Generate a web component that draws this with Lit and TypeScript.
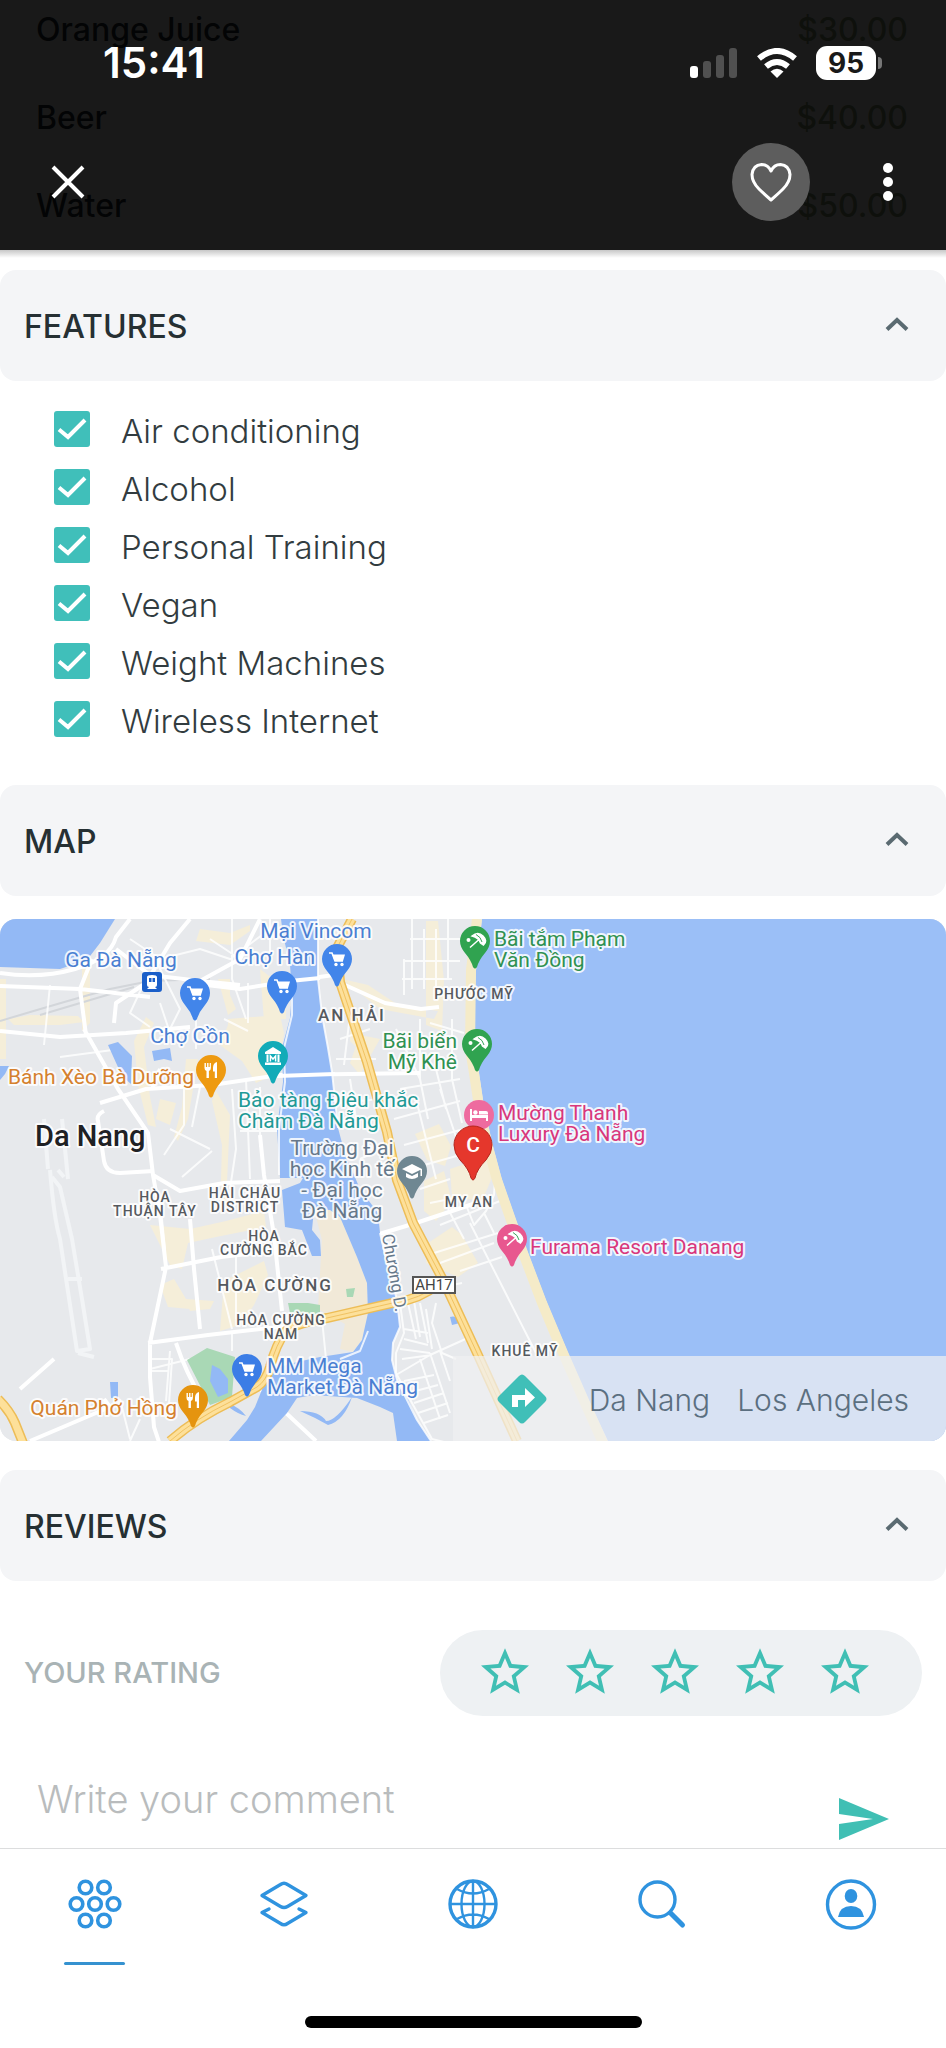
import { LitElement, html, svg, css } from "lit";
import { customElement, property, state } from "lit/decorators.js";

/* ---------- accordion panel heading ---------- */

@customElement("section-bar")
class SectionBar extends LitElement {
  @property() label = "";

  static styles = css`
    :host {
      display: block;
    }
    .bar {
      margin: 0;
      font: inherit;
    }
    .toggle {
      box-sizing: border-box;
      width: 100%;
      height: 111px;
      display: flex;
      align-items: center;
      justify-content: space-between;
      padding: 2px 37px 0 24px;
      border: 0;
      border-radius: 16px;
      background: #f4f5f7;
      color: #263033;
      font: 500 32px/40px Inter, sans-serif;
      cursor: pointer;
    }
    .chevron {
      width: 24px;
      height: 14px;
      margin-bottom: 6px;
      fill: none;
      stroke: #5a6a71;
      stroke-width: 4;
    }
  `;

  render() {
    return html`
      <h2 class="bar">
        <button class="toggle" aria-expanded="true">
          <span>${this.label}</span>
          <svg class="chevron" viewBox="0 0 24 14"><path d="M2 12.5 12 3 22 12.5" /></svg>
        </button>
      </h2>
    `;
  }
}

/* ---------- city map ---------- */

type Glyph = "cart" | "food" | "museum" | "beach" | "grad" | "bed";

const glyphs: Record<Glyph, unknown> = {
  cart: svg`<path d="M-8 -6h3l3 8h8" fill="none" stroke="#fff" stroke-width="1.6"/><path d="M-4.600 -4.500H8L6 2H-2.500z" fill="#fff"/><circle cx="-1" cy="5.500" r="1.700" fill="#fff"/><circle cx="5" cy="5.500" r="1.700" fill="#fff"/>`,
  food: svg`<path d="M-6.500 -7v5q0 2.500 2 3V8h2.400V1q2 -.5 2 -3V-7h-1.200v4h-1.200v-4h-1.400v4h-1.200v-4zM6 -8q-4 1 -4 6v3.500h1.800V8H6z" fill="#fff"/>`,
  museum: svg`<path d="M0 -9 8 -4v2H-8v-2zM-8 6.500H8V9H-8zM-6.500 -1.500h2V6h-2zM4.500 -1.500h2V6h-2z" fill="#fff"/><path d="M-2.600 5.500V0L0 3 2.600 0V5.500" fill="none" stroke="#fff" stroke-width="1.500"/>`,
  beach: svg`<circle cx="-6.500" cy="-1" r="2" fill="#fff"/><path d="M-5 6.500 4 -1.500M-3 -5Q3 -10 8 -5T8.500 4L5.500 2Q4 -3 -3 -5z" fill="#fff" stroke="#fff" stroke-width="1.500"/><path d="M1 -6.500Q6 -4 7 1" fill="none" stroke="#3aa45b" stroke-width="1"/>`,
  grad: svg`<path d="M0 -7 10 -2 0 3 -10 -2zM-6 2v4q6 4 12 0V2L0 5zM8.500 -2h1.500v7H8.500z" fill="#fff"/>`,
  bed: svg`<path d="M-9 -6h2v6h16v6h-2V3H-7v3h-2zM0 -4h7q2 0 2 2v1.500H0z" fill="#fff"/><circle cx="-3.600" cy="-2.500" r="2.200" fill="#fff"/>`,
};

const pins: { x: number; y: number; fill: string; glyph: Glyph }[] = [
  { x: 195, y: 74, fill: "#4285ea", glyph: "cart" },
  { x: 282, y: 67, fill: "#4285ea", glyph: "cart" },
  { x: 337, y: 40, fill: "#4285ea", glyph: "cart" },
  { x: 247, y: 450, fill: "#3b7de6", glyph: "cart" },
  { x: 211, y: 151, fill: "#ee9a10", glyph: "food" },
  { x: 193, y: 481, fill: "#e5940f", glyph: "food" },
  { x: 273, y: 137, fill: "#12abb8", glyph: "museum" },
  { x: 475, y: 22, fill: "#30a350", glyph: "beach" },
  { x: 477, y: 125, fill: "#30a350", glyph: "beach" },
  { x: 512, y: 320, fill: "#e8578f", glyph: "beach" },
  { x: 412, y: 252, fill: "#6f8792", glyph: "grad" },
];

type Label = {
  x: number;
  y: number;
  lines: string[];
  kind: string;
  anchor?: "start" | "middle" | "end";
};

const labels: Label[] = [
  { x: 316, y: 19, lines: ["Mại Vincom"], kind: "shop", anchor: "middle" },
  { x: 315, y: 45, lines: ["Chợ Hàn"], kind: "shop", anchor: "end" },
  { x: 121, y: 48, lines: ["Ga Đà Nẵng"], kind: "shop", anchor: "middle" },
  { x: 190, y: 124, lines: ["Chợ Cồn"], kind: "shop", anchor: "middle" },
  { x: 267, y: 454, lines: ["MM Mega", "Market Đà Nẵng"], kind: "shop" },
  { x: 194, y: 165, lines: ["Bánh Xèo Bà Dưỡng"], kind: "eat", anchor: "end" },
  { x: 177, y: 496, lines: ["Quán Phở Hồng"], kind: "eat", anchor: "end" },
  { x: 238, y: 188, lines: ["Bảo tàng Điêu khắc", "Chăm Đà Nẵng"], kind: "museum" },
  { x: 342, y: 236, lines: ["Trường Đại", "học Kinh tế", "- Đại học", "Đà Nẵng"], kind: "school", anchor: "middle" },
  { x: 494, y: 27, lines: ["Bãi tắm Phạm", "Văn Đồng"], kind: "beach" },
  { x: 457, y: 129, lines: ["Bãi biển", "Mỹ Khê"], kind: "beach", anchor: "end" },
  { x: 498, y: 201, lines: ["Mường Thanh", "Luxury Đà Nẵng"], kind: "hotel" },
  { x: 530, y: 335, lines: ["Furama Resort Danang"], kind: "hotel" },
  { x: 35, y: 227, lines: ["Da Nang"], kind: "city" },
  { x: 352, y: 102, lines: ["AN HẢI"], kind: "town", anchor: "middle" },
  { x: 275, y: 372, lines: ["HÒA CƯỜNG"], kind: "town", anchor: "middle" },
  { x: 474, y: 80, lines: ["PHƯỚC MỸ"], kind: "ward", anchor: "middle" },
  { x: 155, y: 283, lines: ["HÒA", "THUẬN TÂY"], kind: "ward", anchor: "middle" },
  { x: 245, y: 279, lines: ["HẢI CHÂU", "DISTRICT"], kind: "ward", anchor: "middle" },
  { x: 264, y: 322, lines: ["HÒA", "CƯỜNG BẮC"], kind: "ward", anchor: "middle" },
  { x: 281, y: 406, lines: ["HÒA CƯỜNG", "NAM"], kind: "ward", anchor: "middle" },
  { x: 469, y: 288, lines: ["MY AN"], kind: "ward", anchor: "middle" },
  { x: 525, y: 437, lines: ["KHUÊ MỸ"], kind: "ward", anchor: "middle" },
];

const highway =
  "M352 0 337 29 340 63 367 143 387 213 397 261 413 304 443 361 477 434 517 522";
const bridge =
  "M437 366Q420 380 397 383L327 399Q296 404 286 412 276 425 270 448 266 462 257 468L230 483Q195 500 170 522";
const westRoad = "M-2 480Q10 492 15 504L23 524";

@customElement("city-map")
class CityMap extends LitElement {
  static styles = css`
    :host {
      display: block;
    }
    .frame {
      display: grid;
      border-radius: 16px;
      overflow: hidden;
      background: #e7e9ec;
    }
    .map {
      grid-area: 1 / 1;
      display: block;
      width: 100%;
      height: auto;
    }
    text {
      font-family: Roboto, "Noto Sans", sans-serif;
      font-size: 21px;
      paint-order: stroke;
      stroke: #fff;
      stroke-opacity: 0.85;
      stroke-width: 4px;
      stroke-linejoin: round;
    }
    .shop {
      fill: #4a7fd2;
    }
    .eat {
      fill: #d5812e;
    }
    .museum {
      fill: #1f9a96;
    }
    .school,
    .street {
      fill: #66788a;
    }
    .street {
      font-size: 17px;
    }
    .beach {
      fill: #2f9152;
    }
    .hotel {
      fill: #d9377c;
    }
    .city {
      fill: #202124;
      font-size: 29px;
      font-weight: 500;
    }
    .town,
    .ward {
      fill: #55595e;
      font-weight: 500;
      letter-spacing: 1px;
    }
    .town {
      font-size: 17px;
      letter-spacing: 2px;
    }
    .ward {
      font-size: 14px;
    }
    .shield {
      fill: #444;
      font-size: 15px;
      stroke: none;
    }
    .mark {
      fill: #fff;
      stroke: none;
      font-weight: 500;
    }
    .water {
      fill: #93b9f5;
    }
    .sea {
      fill: #9bbff7;
    }
    .sand {
      fill: #f1e9d8;
    }
    .busy {
      fill: #f5eed9;
    }
    .shore {
      fill: none;
      stroke: #f5ebc8;
      stroke-width: 10;
    }
    .park {
      fill: #a9d8b5;
    }
    .road,
    .lane,
    .runway {
      fill: none;
      stroke: #fff;
      stroke-width: 4;
      stroke-linejoin: round;
    }
    .lane {
      stroke-width: 2;
      stroke-opacity: 0.8;
    }
    .runway {
      stroke: #f2f4f6;
      stroke-width: 4;
    }
    .rail {
      fill: none;
      stroke: #d3d6da;
      stroke-width: 2;
    }
    .casing {
      fill: none;
      stroke: #edbd57;
      stroke-width: 10;
    }
    .fill {
      fill: none;
      stroke: #fde09a;
      stroke-width: 7;
    }
    .center {
      fill: none;
      stroke: #f0c263;
      stroke-width: 1;
    }
    .strip {
      grid-area: 1 / 1;
      align-self: end;
      justify-self: end;
      box-sizing: border-box;
      height: 85px;
      display: flex;
      align-items: center;
      padding: 0 37px 0 44px;
      background: rgb(240 240 241 / 72%);
      color: #5b6f80;
      font: 300 30px/40px Inter, sans-serif;
    }
    .turn {
      width: 50px;
      height: 50px;
      margin-right: 42px;
    }
    .places {
      display: flex;
      gap: 27px;
      padding-top: 2px;
      color: inherit;
      text-decoration: none;
    }
  `;

  private pin(x: number, y: number, fill: string, glyph: Glyph) {
    return svg`<g transform="translate(${x} ${y})">
      <path d="M-15 0A15 15 0 1 1 15 0Q15 6 10 12 4 19 2 26 0 29 -2 26 -4 19 -10 12 -15 6 -15 0z" fill=${fill} />
      ${glyphs[glyph]}
    </g>`;
  }

  private label(l: Label) {
    const step = l.kind === "ward" ? 14 : 21;
    return svg`<text class=${l.kind} text-anchor=${l.anchor ?? "start"}>${l.lines.map(
      (t, i) => svg`<tspan x=${l.x} y=${l.y + i * step}>${t}</tspan>`
    )}</text>`;
  }

  render() {
    return html`
      <div class="frame">
        <svg class="map" viewBox="0 0 946 522" role="img" aria-label="Map of Da Nang">
          <rect width="946" height="522" fill="#e7e9ec" />

          <path class="busy" d="M8 100 30 96 78 97 84 103 60 106 14 106zM82 44h8v60l-8 8zM0 60h6v80H0zM134 122l12-24 8 6-10 24 6 50 6 30-8-2-10-40zM218 60h12v16l6 14-8 6zM228 100l52-4 4 18-6 40-22 10-14-22-14-10-8-6 8-20zM186 140h12l-10 60-10 22-4-4 8-30zM216 172l14 24-4 90-6 10 2-70-10-44zM160 180l16 4-6 22-14-6z" />
          <path class="busy" d="M342 60l38 30 54 10 4-8-40-6-30-20zM360 116l20 4-8 14-12 22-10-12zM426 2l12 0 6 60-2 50-16-6zM350 90l10 10-2 30-8-8zM415 215l24-10 12 22-6 20-18-6zM450 250l36-12 8 16-12 28-30-4zM424 262l20-10 8 30-16 20-12-10zM428 324l24-16 10 8 16 28-20 14-32-14z" />
          <path class="busy" d="M150 306l40 4 36-8 38-10 2 16-50 10-28 6-6 26-12-4zM160 366l14-6 12 20 4 10-22-2zM186 380l28 2-4 8-20 2zM224 362l40-20 4 14-14 30-14 20-20 6zM200 10l30 4 20-8v6l-20 14-34-4zM260 50l26 20v30l-22 2z" />
          <path class="sand" d="M314 290 330 291 340 298 357 338 367 364 368 394 362 421 353 433 340 430 345 405 318 390 321 337 322 321z" />

          <path class="rail" d="M0 102Q60 84 110 70L150 62 210 60M40 96 134 68" />
          <path class="runway" d="M50 251Q54 300 60 320L77 432 90 430 82 380 72 320 60 268 52 258M68 360h14M64 258 58 251M44 200l4 50M62 200l6 60M78 434l16 4" />

          <path class="road" d="M0 54Q40 60 75 50T116 18L130 0M0 67 80 70 150 78M0 112 60 118 126 114 190 108M84 110 118 170 148 214 153 256 180 272 224 264 280 262M86 116 80 70 92 40M116 30 150 56 200 62 240 66M190 0l-20 24-24 40-30 20-2 20M200 62 240 40 260 0M190 64 240 70 290 62 334 56M100 184l46-14 66-4 68-10 140-2M104 192q-8 4-6 10l6 40q2 12 16 12l34-2M160 150l-8 20M153 256l7 40 6 52-16 76 0 34 4 50 12 36M148 424l60-8 70-8 48-4M161 350l60-12 52-6M190 300l4 50 6 60M260 216l4 40 10 60 8 76M176 424q10 30 26 56M256 466l60 56M30 522 110 488 104 480M20 470 54 440M345 66l40 18 36 6 18-2M376 316l40-12 60-20" />
          <path class="lane" d="M0 40 80 44M50 66l-6 60M130 20l30 20 40-10 30 10 40-30M150 30l30 60-10 20M150 108l-20-14 14-30M232 0v60l14 40M248 64v40M210 20l30 20M224 100l24 12M160 84l10 30M196 100v30M184 170v36l-20 30M200 168l-8 40M232 170l4 60-6 40M246 160l4 100M260 168v60M212 232l-30 26M60 138l60-8M270 0v40M240 212h40M170 210l40 20M165 330l-4-40M212 330l20 80M236 330v70M150 440h22l-4 60M152 452h16M170 432l-4 50M190 440l-40 10M120 480l10 40M140 500l-10 22M232 412v20M322 400l4 40M360 240l30-14" />
          <path class="lane" d="M404 42h56M410 20h50M412 0v70M424 10v60M436 10v60M448 0v60M402 60h50M404 40v36M420 100v60l8 40M436 150l10 40M452 100v60l10 44M400 170l60-10M394 200l66-18M404 226l60-16M410 250l50-14M420 270l30-10M416 180l10 40 10 40M440 170l20 60M340 120l30-10M336 140h40M350 160l6 40M340 184l40-4M430 104l34 10M396 110l24 50M350 96l-6 50M448 290l16 30M466 286l8 20 12-14 8-16 2-30M440 306l60-24M430 284l30-6M470 304l66 130M484 294l10 20M434 334l64-20M440 344l54-20M460 352l42-14" />
          <path class="lane" d="M400 384l4 30-8 20 0 20 16 30 20 36 16 4M408 384l8 36M414 382l6 36M420 384l8 40M426 390l6 40M404 410l24 4M404 420l24 6M400 430l30 4M402 440l30-4M396 456l34-20 40-18M404 462l30-6M408 474l30-8M414 484l30-10M418 494l30-10M424 504l24-8M420 440l20 60M430 434l20 60M440 432l10 30M436 384l-4 20 10 30 14 6M432 370l30-6" />

          <path class="water" d="M0 0H115L100 24 87 41 60 50 0 48zM108 126l10-3 14 14-1 28-9-8zM152 132l18-3 2 13-8-2-10 2zM0 147h9l-4 8-5 6z" />
          <path class="water" d="M281 0H318V60L322 96 328 129 332 153 338 209 345 235 360 270 378 294 380 314 387 344 397 381 400 408 393 424 392 441 397 461 407 478 417 501 431 522H397L393 494 380 488 357 479 313 476 297 479 287 494 261 522H229L247 501 255 488 263 468 266 452 297 443 320 438 353 433 362 421 368 394 367 364 357 338 340 298 330 291 314 290 312 311 320 321 321 337H312L302 311 285 308 282 271 300 264 303 259H280L277 209 283 163 282 129 290 99 292 73 290 46 283 16z" />
          <path class="water" d="M300 492q20 0 26 10 10 0 26-24-8 24-24 28-14-8-28-14zM230 485q10 4 16 12-8-2-16-8zM450 398q8-2 10 6l-8 2z" />
          <path class="road" d="M277 157 335 155M290 62 320 59" />
          <path class="lane" d="M318 0V60L322 96 328 129 332 153 338 209M292 60V96L284 129 285 163 279 209V256M380 314l7 30 10 37 3 27-7 16-1 17 5 20 20 40 14 21M340 440l20-8 8-20" />

          <path class="park" d="M187 441 207 429 235 438 232 478 210 486zM288 384h20l12 2v10l-30-2zM346 370l9-1-2 9h-6z" />
          <path class="water" d="M212 446l8 4 8 10v14l-10 4-8-16zM110 463h8v16h-7z" />

          <path class="sea" d="M482 0 476 51 475 80 475 130 479 154 483 181 492 224 502 261 517 304 528 334 547 384 568 434 590 484 608 522H946V0z" />
          <path class="shore" d="M477 0 471 51 470 130 474 154 478 181 487 224 497 261 512 304 523 334 542 384 563 434 585 484 603 524" />

          <path class="casing" d=${westRoad} /><path class="fill" d=${westRoad} />
          <path class="casing" d=${bridge} /><path class="fill" d=${bridge} /><path class="center" d=${bridge} />
          <path class="casing" d=${highway} /><path class="fill" d=${highway} /><path class="center" d=${highway} />

          ${labels.map((l) => this.label(l))}
          <text class="street" transform="translate(382 316) rotate(80)">Chương D.</text>
          <rect x="413" y="358" width="42" height="16" fill="#fff" stroke="#555" stroke-width="2" />
          <text class="shield" x="434" y="371" text-anchor="middle">AH17</text>

          <g transform="translate(142 53)">
            <rect width="20" height="20" rx="3" fill="#1b5fc9" />
            <path d="M5 5q0-2 5-2t5 2v8q0 2-2 2l2 2H5l2-2q-2 0-2-2z" fill="#fff" />
            <path d="M7 6h6v4H7z" fill="#1b5fc9" /><path d="M10 6v4" stroke="#fff" />
          </g>
          ${pins.map((p) => this.pin(p.x, p.y, p.fill, p.glyph))}
          <g transform="translate(479 196)">
            <circle r="15" fill="#ee6b9f" />${glyphs.bed}
          </g>
          <path d="M454 226A19 19 0 1 1 492 226Q492 234 486 241 477 250 475 259 473 263 471 259 469 250 460 241 454 234 454 226z" fill="#e5372c" stroke="#b5271f" />
          <text class="mark" x="473" y="233" text-anchor="middle">C</text>
        </svg>

        <div class="strip">
          <svg class="turn" viewBox="0 0 50 50">
            <path d="M22 2q3-3 6 0l20 20q3 3 0 6L28 48q-3 3-6 0L2 28q-3-3 0-6z" fill="#40bfb8" />
            <path d="M15 33V21h13V14l10 9.500-10 9.500V26H21v7z" fill="#fff" />
          </svg>
          <a class="places" href="#directions"><span>Da Nang</span><span>Los Angeles</span></a>
        </div>
      </div>
    `;
  }
}

/* ---------- page ---------- */

const drinks = [
  ["Orange Juice", "$30.00"],
  ["Beer", "$40.00"],
  ["Water", "$50.00"],
];

const features = [
  "Air conditioning",
  "Alcohol",
  "Personal Training",
  "Vegan",
  "Weight Machines",
  "Wireless Internet",
];

const tabs = [
  {
    name: "Home",
    icon: svg`<g stroke-width="3.600"><circle cx="18.500" cy="11.500" r="6.300"/><circle cx="37" cy="11.500" r="6.300"/><circle cx="9.500" cy="28" r="6.300"/><circle cx="28" cy="28" r="6.300"/><circle cx="46.500" cy="28" r="6.300"/><circle cx="18.500" cy="44.500" r="6.300"/><circle cx="37" cy="44.500" r="6.300"/></g>`,
  },
  {
    name: "Categories",
    icon: svg`<g stroke-width="3.400" stroke-linejoin="round" stroke-linecap="round"><path d="M24.500 8.500Q28 6 31.500 8.500L50 19.500 31.500 30.500Q28 32.500 24.500 30.500L6 19.500z"/><path d="M13 33 6 36.500 24.500 47.500Q28 50 31.500 47.500L50 36.500 43 33"/></g>`,
  },
  {
    name: "Explore",
    icon: svg`<circle cx="28" cy="28" r="23" stroke-width="3.400"/><g stroke-width="2.400"><path d="M28 5v46M5 28h46M12 13q16 9 32 0M12 43q16 -9 32 0"/><ellipse cx="28" cy="28" rx="11.500" ry="23"/></g>`,
  },
  {
    name: "Search",
    icon: svg`<circle cx="23.500" cy="23.500" r="17.500" stroke-width="3.400"/><path d="M36.500 37 48.500 49" stroke-width="5" stroke-linecap="round"/>`,
  },
  {
    name: "Profile",
    icon: svg`<circle cx="28" cy="28.500" r="23.500" stroke-width="3.400"/><g fill="currentColor" stroke="none"><ellipse cx="28" cy="20" rx="6.300" ry="7"/><path d="M15 41Q17 30 28 30T41 41z"/></g>`,
  },
];

@customElement("app-root")
class AppRoot extends LitElement {
  @state() private rating = 0;

  static styles = css`
    :host {
      display: flex;
      flex-direction: column;
      min-height: 100vh;
      background: #fff;
      color: #263033;
      font-family: Inter, sans-serif;
    }
    ul {
      margin: 0;
      padding: 0;
      list-style: none;
    }
    button {
      padding: 0;
      border: 0;
      background: none;
      color: inherit;
      cursor: pointer;
    }

    .top {
      display: grid;
      grid-template-rows: 250px;
      overflow: hidden;
    }
    .menu {
      grid-area: 1 / 1;
      align-self: end;
      padding: 0 38px 0 36px;
    }
    .drink {
      display: flex;
      justify-content: space-between;
      font: 500 32px/88px Inter, sans-serif;
    }
    .price {
      color: #93a67a;
    }
    .shade {
      grid-area: 1 / 1;
      z-index: 1;
      background: rgb(0 0 0 / 90%);
      color: #fff;
    }
    .status {
      display: flex;
      align-items: center;
      gap: 18px;
      padding: 38px 64px 0 103px;
    }
    .clock {
      flex: 1;
      font: 600 42px/50px Inter, sans-serif;
    }
    .signal {
      width: 48px;
      height: 30px;
    }
    .wifi {
      width: 42px;
      height: 30px;
    }
    .battery {
      display: flex;
      align-items: center;
      gap: 2px;
    }
    .level {
      width: 60px;
      border-radius: 11px;
      background: #fff;
      color: #191919;
      font: 700 28px/34px Inter, sans-serif;
      text-align: center;
    }
    .nub {
      width: 4px;
      height: 12px;
      border-radius: 0 4px 4px 0;
      background: #777;
    }
    .actions {
      display: flex;
      align-items: center;
      padding: 55px 51px 0 51px;
    }
    .close,
    .more {
      display: flex;
    }
    .close {
      margin-right: auto;
    }
    .like {
      width: 78px;
      height: 78px;
      margin-right: 71px;
      display: grid;
      place-items: center;
      border-radius: 50%;
      background: #5d5d5d;
    }
    .line {
      fill: none;
      stroke: #fff;
    }

    .content {
      flex: 1;
      display: flex;
      flex-direction: column;
      padding-top: 20px;
      background: linear-gradient(rgb(0 0 0 / 22%), transparent 8px);
    }
    .features {
      padding: 19px 54px 37px;
    }
    .feature {
      display: flex;
      align-items: center;
      gap: 31px;
      height: 58px;
      color: #323c40;
      font: 300 33px/40px Inter, sans-serif;
    }
    .feature-name {
      padding-top: 3px;
    }
    .box {
      appearance: none;
      flex: none;
      width: 36px;
      height: 36px;
      margin: 0;
      border-radius: 3px;
      background: #40bfba;
    }
    .box:checked {
      background: #40bfba
        url("data:image/svg+xml,%3Csvg xmlns='http://www.w3.org/2000/svg' viewBox='0 0 36 36'%3E%3Cpath d='M5 18.500 14 26 31 9' fill='none' stroke='%23fff' stroke-width='4'/%3E%3C/svg%3E");
    }
    .map {
      margin: 23px 0 29px;
    }

    .rate {
      display: flex;
      align-items: center;
      justify-content: space-between;
      margin: 49px 0 40px;
      padding: 0 24px;
    }
    .caption {
      color: #a9b3b5;
      font: 500 29px/40px Inter, sans-serif;
    }
    .stars {
      display: flex;
      gap: 37px;
      padding: 18px 53px 22px 41px;
      border-radius: 43px;
      background: #eef1f3;
    }
    .star {
      position: relative;
      display: block;
      height: 46px;
      cursor: pointer;
    }
    .pick {
      position: absolute;
      inset: 0;
      width: 100%;
      height: 100%;
      margin: 0;
      opacity: 0;
    }
    .glyph {
      width: 48px;
      height: 46px;
      fill: #40bfb4;
    }
    .comment {
      display: flex;
      height: 92px;
      padding: 0 57px 0 37px;
    }
    .entry {
      flex: 1;
      min-width: 0;
      height: 86px;
      padding: 0;
      border: 0;
      outline: 0;
      background: none;
      color: #263033;
      font: 300 38px/44px Inter, sans-serif;
    }
    .entry::placeholder {
      color: #b9bcbd;
      opacity: 1;
    }
    .send {
      align-self: end;
      display: flex;
      padding-bottom: 8px;
    }

    .dock {
      border-top: 1px solid #dcddde;
      background: #fff;
    }
    .tabs {
      display: grid;
      grid-template-columns: repeat(5, 1fr);
      padding: 27px 0 51px;
    }
    .tab {
      display: flex;
      flex-direction: column;
      align-items: center;
      gap: 30px;
      color: #2f93df;
    }
    .tab-icon {
      width: 56px;
      height: 56px;
      fill: none;
      stroke: currentColor;
    }
    .active::after {
      content: "";
      width: 61px;
      height: 3px;
      border-radius: 2px;
      background: #3592d0;
    }
    .indicator {
      width: 337px;
      height: 12px;
      margin: 0 auto 20px;
      border-radius: 6px;
      background: #000;
    }
  `;

  render() {
    return html`
      <header class="top">
        <ul class="menu">
          ${drinks.map(
            ([name, price]) =>
              html`<li class="drink"><span>${name}</span><span class="price">${price}</span></li>`
          )}
        </ul>
        <div class="shade">
          <div class="status">
            <span class="clock">15:41</span>
            <svg class="signal" viewBox="0 0 48 30">
              <rect y="18" width="8" height="12" rx="3" fill="#fff" />
              <g fill="#505050">
                <rect x="13" y="13" width="8" height="17" rx="3" />
                <rect x="26" y="7" width="8" height="23" rx="3" />
                <rect x="39" width="8" height="30" rx="3" />
              </g>
            </svg>
            <svg class="wifi" viewBox="0 0 42 30">
              <g fill="none" stroke="#fff" stroke-width="6">
                <path d="M3 10.500Q21 -4.500 39 10.500" />
                <path d="M10 18.500Q21 9.500 32 18.500" />
              </g>
              <path d="M21 30 14.500 23.500Q21 18 27.500 23.500z" fill="#fff" />
            </svg>
            <div class="battery"><span class="level">95</span><span class="nub"></span></div>
          </div>
          <div class="actions">
            <button class="close" aria-label="Close">
              <svg width="34" height="34" viewBox="0 0 34 34">
                <path class="line" stroke-width="4" d="M2 2 32 32M32 2 2 32" />
              </svg>
            </button>
            <button class="like" aria-label="Add to favourites">
              <svg width="42" height="40" viewBox="0 0 42 40">
                <path
                  class="line"
                  stroke-width="3"
                  stroke-linejoin="round"
                  d="M21 38Q14 32 9 27 2 20 2 12.500 3 3 11.500 2.500 18 2.500 21 9 24 2.500 30.500 2.500 39 3 40 12.500 40 20 33 27 28 32 21 38z"
                />
              </svg>
            </button>
            <button class="more" aria-label="More options">
              <svg width="14" height="40" viewBox="0 0 14 40" fill="#fff">
                <circle cx="7" cy="6" r="5" />
                <circle cx="7" cy="20" r="5" />
                <circle cx="7" cy="34" r="5" />
              </svg>
            </button>
          </div>
        </div>
      </header>

      <main class="content">
        <section-bar label="FEATURES"></section-bar>
        <ul class="features">
          ${features.map(
            (name) => html`<li>
              <label class="feature"
                ><input class="box" type="checkbox" checked /><span class="feature-name">${name}</span></label
              >
            </li>`
          )}
        </ul>

        <section-bar label="MAP"></section-bar>
        <city-map class="map"></city-map>

        <section-bar label="REVIEWS"></section-bar>
        <div class="rate">
          <span class="caption" id="rating-caption">YOUR RATING</span>
          <div class="stars" role="radiogroup" aria-labelledby="rating-caption">
            ${[1, 2, 3, 4, 5].map(
              (n) => html`<label class="star">
                <input
                  class="pick"
                  type="radio"
                  name="rating"
                  aria-label="${n} of 5"
                  @change=${() => (this.rating = n)}
                />
                <svg class="glyph" viewBox="2 2 20 19">
                  <path
                    d=${n <= this.rating
                      ? "M12 17.270 18.180 21l-1.640-7.030L22 9.240l-7.190-.610L12 2 9.190 8.630 2 9.240l5.460 4.730L5.820 21z"
                      : "M22 9.240l-7.190-.620L12 2 9.190 8.630 2 9.240l5.460 4.730L5.820 21 12 17.270 18.180 21l-1.630-7.030L22 9.240zM12 15.400l-3.760 2.270 1-4.280-3.320-2.880 4.380-.380L12 6.100l1.710 4.040 4.380.380-3.320 2.880 1 4.280L12 15.400z"}
                  />
                </svg>
              </label>`
            )}
          </div>
        </div>
        <form class="comment" @submit=${(e: Event) => e.preventDefault()}>
          <input class="entry" type="text" aria-label="Comment" placeholder="Write your comment" />
          <button class="send" aria-label="Send">
            <svg width="50" height="42" viewBox="0 0 50 42">
              <path d="M0 0 50 21 0 42V26L34 21 0 16z" fill="#40bfb4" />
            </svg>
          </button>
        </form>
      </main>

      <footer class="dock">
        <nav class="tabs">
          ${tabs.map(
            (t, i) => html`<a class="tab ${i === 0 ? "active" : ""}" href="#${t.name}" aria-label=${t.name}>
              <svg class="tab-icon" viewBox="0 0 56 56">${t.icon}</svg>
            </a>`
          )}
        </nav>
        <div class="indicator"></div>
      </footer>
    `;
  }
}
